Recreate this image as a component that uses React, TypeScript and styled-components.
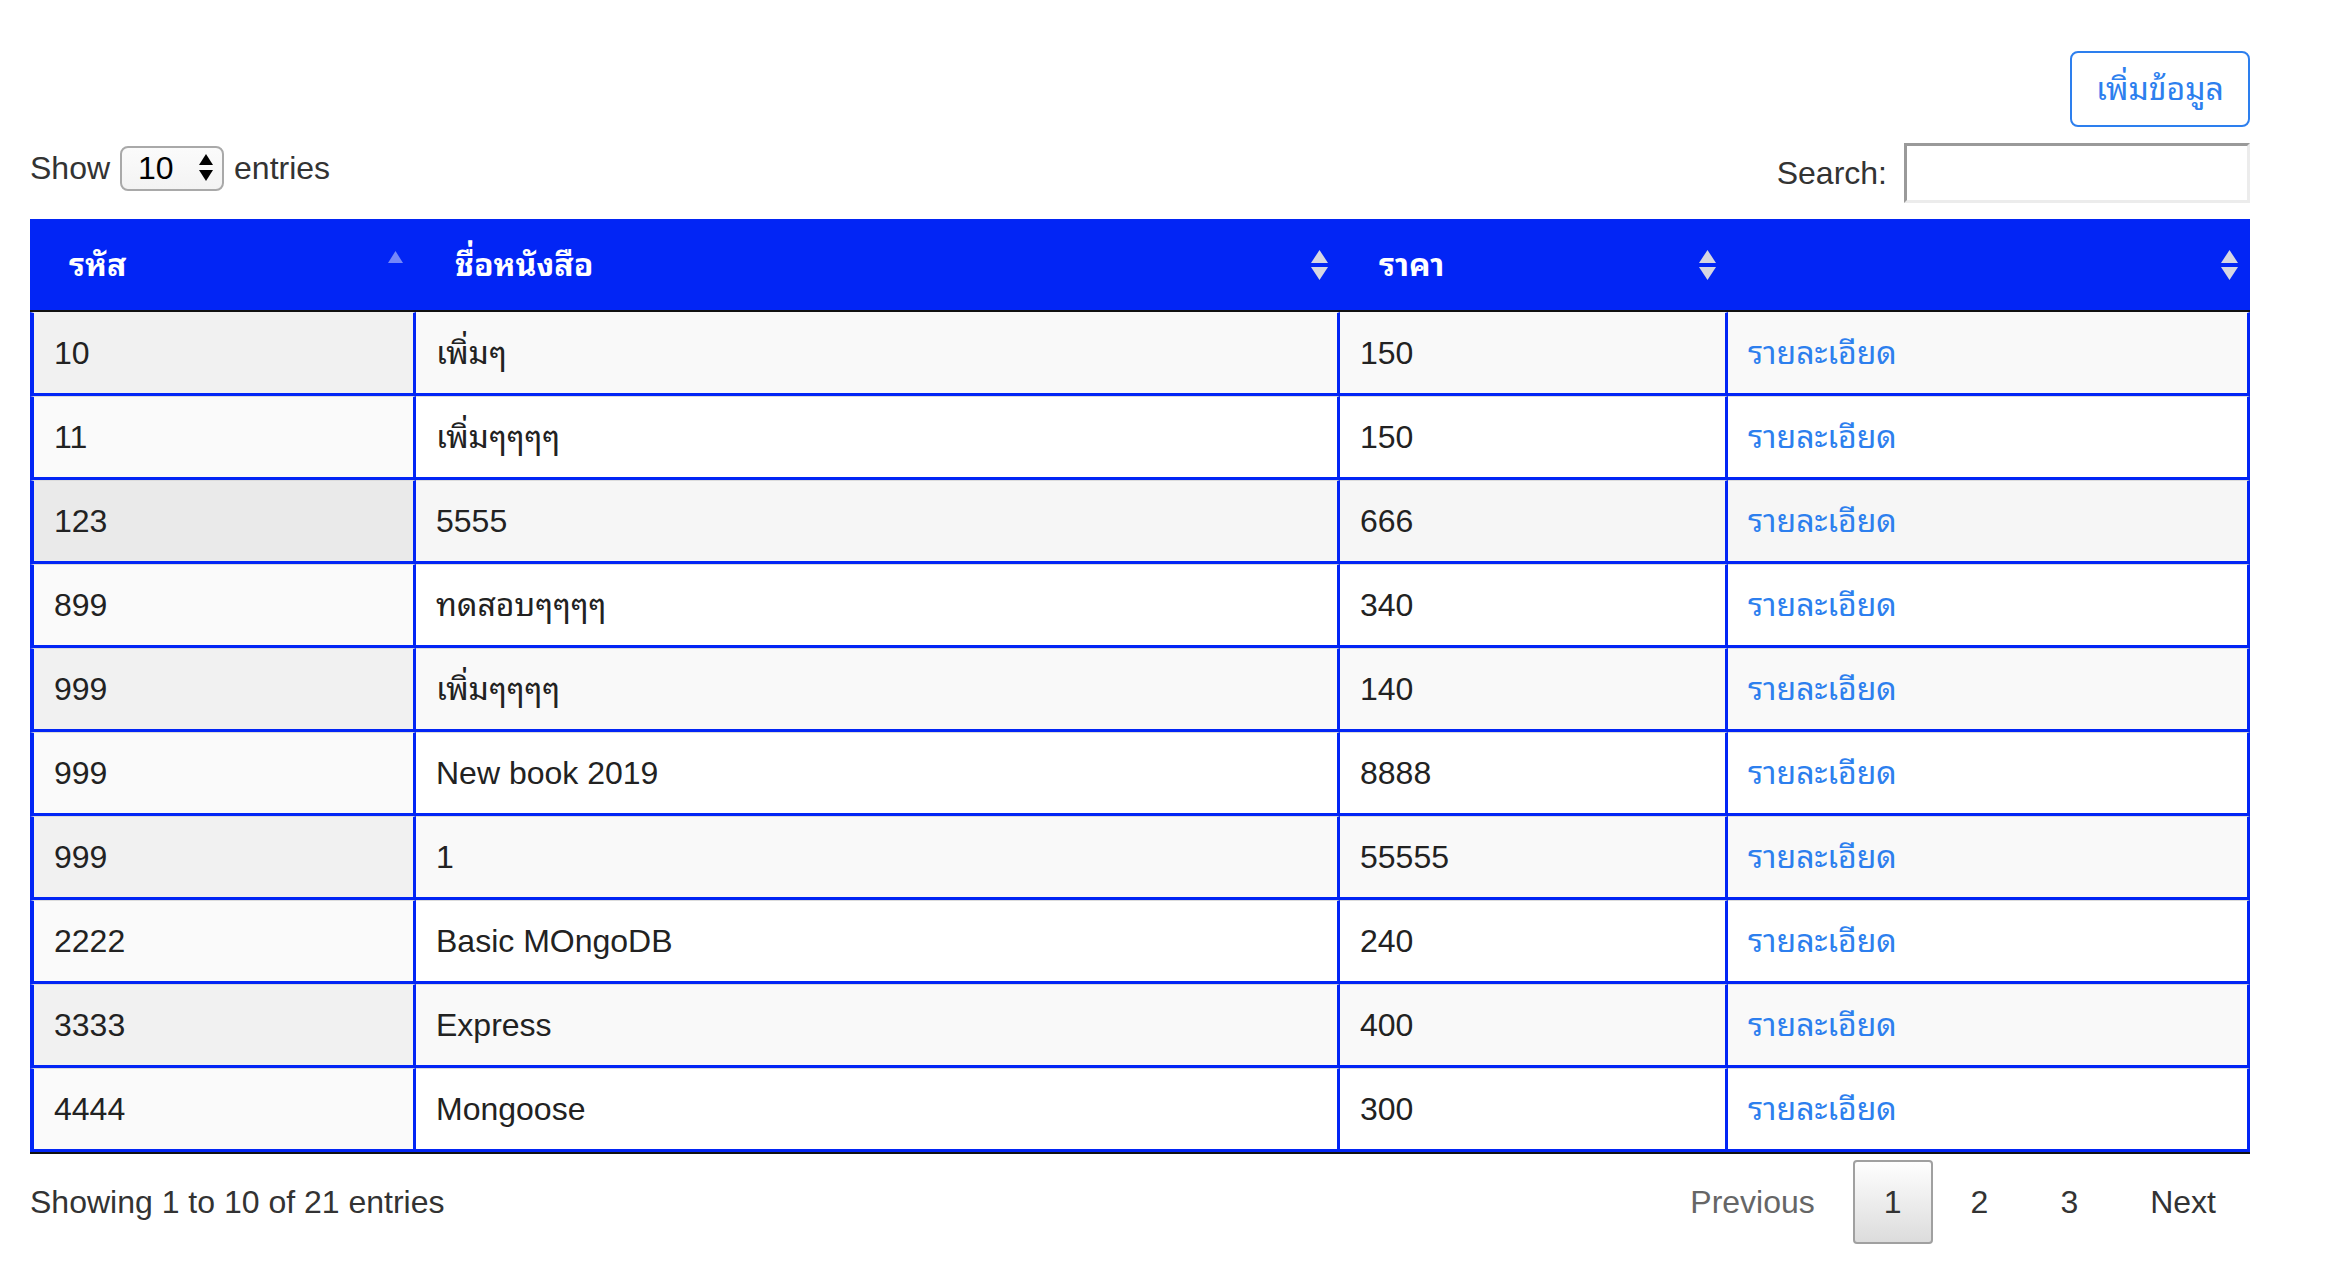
import React from 'react';
import styled, { createGlobalStyle } from 'styled-components';

const BLUE = '#0225f5';
const LINK = '#2d7fee';

const GlobalStyle = createGlobalStyle`
  html, body { margin: 0; padding: 0; background: #fff; }
  body {
    font-family: "Liberation Sans", "Noto Sans Thai Looped", "Loma", "Garuda", "Waree", "Norasi", "Noto Sans Thai", "Noto Sans Thai UI", "Noto Sans", Arial, sans-serif;
    color: #333;
    font-size: 32px;
    line-height: 48px;
  }
  * { box-sizing: border-box; }
`;

const Page = styled.div`
  width: 2220px;
  margin-left: 30px;
  padding-top: 51px;
`;

const TopBar = styled.div`
  display: flex;
  justify-content: flex-end;
`;

const AddButton = styled.button`
  font: inherit;
  font-size: 32px;
  line-height: 48px;
  color: ${LINK};
  background: #fff;
  border: 2px solid ${LINK};
  border-radius: 8px;
  padding: 12px 24px;
  cursor: pointer;
`;

const Controls = styled.div`
  display: flex;
  justify-content: space-between;
  align-items: flex-start;
  margin-top: 16px;
  height: 76px;
`;

const LengthLabel = styled.label`
  display: flex;
  align-items: center;
  gap: 10px;
  height: 50px;
`;

const SelectBox = styled.div`
  width: 104px;
  height: 45px;
  border: 2px solid #a9a9a9;
  border-radius: 8px;
  background: linear-gradient(#fbfbfb, #f3f3f3);
  display: flex;
  align-items: center;
  justify-content: space-between;
  padding: 0 8px 0 16px;
  color: #000;
`;

const FilterLabel = styled.label`
  display: flex;
  align-items: center;
  gap: 17px;
  height: 60px;
`;

const SearchInput = styled.input`
  width: 346px;
  height: 60px;
  border-style: solid;
  border-width: 3px;
  border-color: #9a9a9a #ececec #ececec #9a9a9a;
  font: inherit;
  padding: 0 8px;
  background: #fff;
  outline: none;
`;

const Table = styled.table`
  width: 2220px;
  table-layout: fixed;
  border-collapse: separate;
  border-spacing: 0;
  border-bottom: 2px solid #111;
`;

const Col = styled.col<{ $w: number }>`
  width: ${(p) => p.$w}px;
`;

const Th = styled.th`
  background: ${BLUE};
  color: #fff;
  font-weight: 700;
  text-align: left;
  padding: 22px 12px 21px 39px;
  border-bottom: 2px solid #111;
  line-height: 48px;
`;

const ThInner = styled.div`
  display: flex;
  align-items: center;
  justify-content: space-between;
`;

type Variant = 'odd' | 'even' | 'hover';

const BG: Record<Variant, [string, string]> = {
  odd: ['#f1f1f1', '#f9f9f9'],
  even: ['#fafafa', '#ffffff'],
  hover: ['#eaeaea', '#f6f6f6'],
};

const Td = styled.td<{ $variant: Variant; $sorted?: boolean; $first?: boolean; $topRow?: boolean }>`
  background: ${(p) => BG[p.$variant][p.$sorted ? 0 : 1]};
  padding: 16px 20px;
  line-height: 48px;
  color: #222;
  border-top: 1px solid ${(p) => (p.$topRow ? 'transparent' : '#dcdcdc')};
  border-bottom: 3px solid ${BLUE};
  border-right: 3px solid ${BLUE};
  border-left: ${(p) => (p.$first ? `4px solid ${BLUE}` : '0')};
  white-space: nowrap;
  overflow: hidden;
`;

const DetailLink = styled.a`
  color: ${LINK};
  text-decoration: none;
`;

const Footer = styled.div`
  display: flex;
  justify-content: space-between;
  align-items: center;
  padding-top: 6px;
`;

const Info = styled.div`
  color: #333;
`;

const Pagination = styled.div`
  display: flex;
  align-items: center;
`;

const PageButton = styled.a<{ $current?: boolean; $disabled?: boolean }>`
  display: inline-block;
  padding: 16px ${(p) => (p.$current ? 29 : 32)}px;
  margin-left: 4px;
  border: 2px solid ${(p) => (p.$current ? '#a0a0a0' : 'transparent')};
  border-radius: 4px;
  line-height: 48px;
  text-align: center;
  color: ${(p) => (p.$disabled ? '#666' : '#333')};
  background: ${(p) => (p.$current ? 'linear-gradient(to bottom, #fefefe 0%, #dcdcdc 100%)' : 'transparent')};
  cursor: pointer;
`;

const SortBoth = () => (
  <svg width="17" height="30" viewBox="0 0 17 30">
    <polygon points="8.5,0 17,13 0,13" fill="#d6d6e2" />
    <polygon points="0,17 17,17 8.5,30" fill="#d6d6e2" />
  </svg>
);

const SortAsc = () => (
  <svg width="17" height="30" viewBox="0 0 17 30">
    <polygon points="8.5,1 16,13 1,13" fill="rgba(255,255,255,0.45)" />
  </svg>
);

const SelectArrows = () => (
  <svg width="16" height="30" viewBox="0 0 16 30">
    <polygon points="8,1 15,12 1,12" fill="#000" />
    <polygon points="1,17 15,17 8,28" fill="#000" />
  </svg>
);

const rows: [string, string, string][] = [
  ['10', 'เพิ่มๆ', '150'],
  ['11', 'เพิ่มๆๆๆๆ', '150'],
  ['123', '5555', '666'],
  ['899', 'ทดสอบๆๆๆๆ', '340'],
  ['999', 'เพิ่มๆๆๆๆ', '140'],
  ['999', 'New book 2019', '8888'],
  ['999', '1', '55555'],
  ['2222', 'Basic MOngoDB', '240'],
  ['3333', 'Express', '400'],
  ['4444', 'Mongoose', '300'],
];

export default function App() {
  return (
    <>
      <GlobalStyle />
      <Page>
        <TopBar>
          <AddButton>เพิ่มข้อมูล</AddButton>
        </TopBar>
        <Controls>
          <LengthLabel>
            Show
            <SelectBox>
              <span>10</span>
              <SelectArrows />
            </SelectBox>
            entries
          </LengthLabel>
          <FilterLabel>
            Search:
            <SearchInput type="search" />
          </FilterLabel>
        </Controls>
        <Table>
          <colgroup>
            <Col $w={386} />
            <Col $w={924} />
            <Col $w={388} />
            <Col $w={522} />
          </colgroup>
          <thead>
            <tr>
              <Th>
                <ThInner>
                  <span>รหัส</span>
                  <SortAsc />
                </ThInner>
              </Th>
              <Th>
                <ThInner>
                  <span>ชื่อหนังสือ</span>
                  <SortBoth />
                </ThInner>
              </Th>
              <Th>
                <ThInner>
                  <span>ราคา</span>
                  <SortBoth />
                </ThInner>
              </Th>
              <Th>
                <ThInner>
                  <span />
                  <SortBoth />
                </ThInner>
              </Th>
            </tr>
          </thead>
          <tbody>
            {rows.map((r, i) => {
              const v: Variant = i === 2 ? 'hover' : i % 2 === 0 ? 'odd' : 'even';
              const top = i === 0;
              return (
                <tr key={i}>
                  <Td $variant={v} $sorted $first $topRow={top}>{r[0]}</Td>
                  <Td $variant={v} $topRow={top}>{r[1]}</Td>
                  <Td $variant={v} $topRow={top}>{r[2]}</Td>
                  <Td $variant={v} $topRow={top}>
                    <DetailLink href="#">รายละเอียด</DetailLink>
                  </Td>
                </tr>
              );
            })}
          </tbody>
        </Table>
        <Footer>
          <Info>Showing 1 to 10 of 21 entries</Info>
          <Pagination>
            <PageButton $disabled>Previous</PageButton>
            <PageButton $current>1</PageButton>
            <PageButton>2</PageButton>
            <PageButton>3</PageButton>
            <PageButton>Next</PageButton>
          </Pagination>
        </Footer>
      </Page>
    </>
  );
}
